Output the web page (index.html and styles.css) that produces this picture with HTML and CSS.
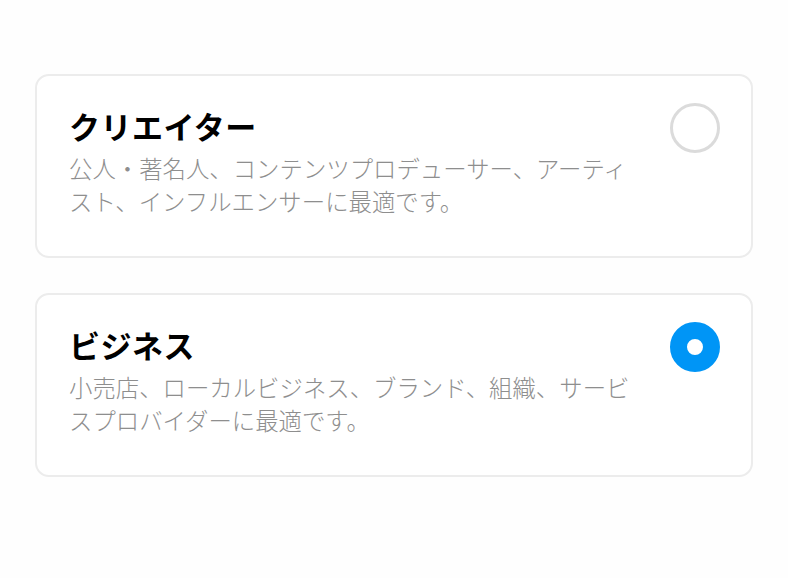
FILE: index.html
```html
<!DOCTYPE html>
<html lang="ja">
<head>
<meta charset="utf-8">
<link rel="stylesheet" href="styles.css">
</head>
<body>
<main class="list">
  <section class="card">
    <div class="info">
      <h2 class="title">クリエイター</h2>
      <p class="desc">公人・著名人、コンテンツプロデューサー、アーティスト、インフルエンサーに最適です。</p>
    </div>
    <span class="radio"></span>
  </section>
  <section class="card">
    <div class="info">
      <h2 class="title">ビジネス</h2>
      <p class="desc">小売店、ローカルビジネス、ブランド、組織、サービスプロバイダーに最適です。</p>
    </div>
    <span class="radio checked"></span>
  </section>
</main>
</body>
</html>
```
FILE: styles.css
```css
html, body {
  margin: 0;
  padding: 0;
  background: #fefefe;
}
body {
  font-family: "Noto Sans CJK JP", "Noto Sans", sans-serif;
}
.list {
  display: flex;
  flex-direction: column;
  gap: 35px;
  padding: 74px 35px 0 35px;
}
.card {
  box-sizing: border-box;
  height: 184px;
  border: 2px solid #ececec;
  border-radius: 14px;
  background: #fff;
  display: flex;
  justify-content: space-between;
  align-items: flex-start;
  padding: 29px 31px 0 32px;
}
.info {
  width: 575px;
}
.title {
  margin: 0;
  font-size: 31px;
  line-height: 42px;
  font-weight: 700;
  letter-spacing: 0.5px;
  color: #000;
}
.desc {
  margin: 5px 0 0 0;
  font-size: 23.4px;
  line-height: 33px;
  color: #8e8e8e;
  font-weight: 300;
}
.radio {
  box-sizing: border-box;
  width: 50px;
  height: 50px;
  border-radius: 50%;
  border: 3px solid #dbdbdb;
  margin-top: -2px;
  flex: none;
}
.radio.checked {
  border: 17px solid #0095f6;
  background: #fff;
}
```
